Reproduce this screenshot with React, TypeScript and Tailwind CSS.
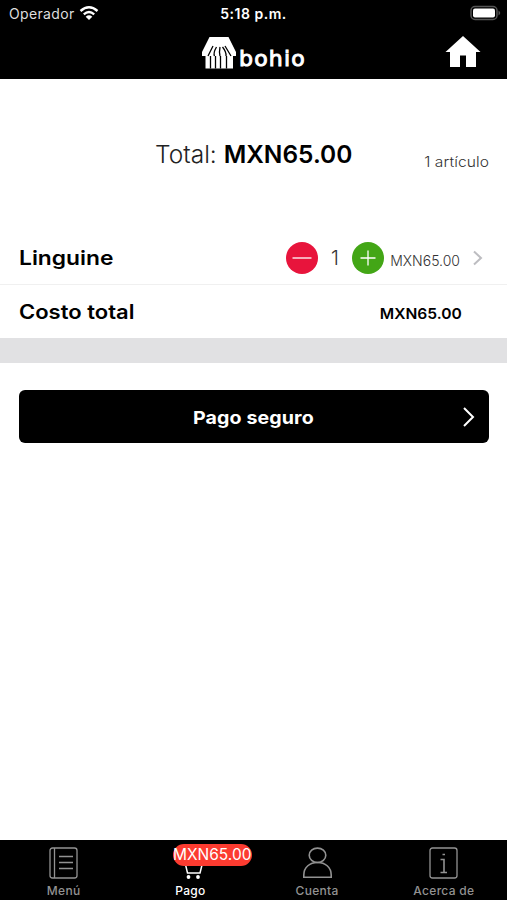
import type { ReactNode } from "react";

const PRICE = "MXN65.00";

export default function App() {
  return (
    <div className="flex h-[900px] w-[507px] flex-col overflow-hidden bg-white font-['Inter','Liberation_Sans',sans-serif] text-black">
      <header className="h-[79px] shrink-0 bg-black text-white">
        <StatusBar />
        <div className="grid h-[50px] grid-cols-3 items-center">
          <div />
          <Logo />
          <HomeIcon />
        </div>
      </header>

      <main className="flex-1">
        {/* Resumen */}
        <div className="grid h-[152px] grid-cols-[1fr_auto_1fr] items-center">
          <div />
          <h1 className="scale-x-[1.02] text-[24px] leading-8 font-light whitespace-nowrap text-[#222]">
            Total: <span className="font-semibold text-black">{PRICE}</span>
          </h1>
          <div className="origin-right scale-x-[1.11] pt-[12px] pr-[16px] text-right text-[14px] font-light tracking-[0.1px] text-[#333]">
            1 artículo
          </div>
        </div>

        <div className="flex h-[54px] items-center border-b border-[#f0f0f0] pr-[24px] pl-[19px]">
          <div className="flex-1 pt-px text-[20px] font-semibold">
            <span className="inline-block origin-left scale-x-[1.14]">Linguine</span>
          </div>
          <RoundButton color="bg-[#e8143c]">
            <path d="M6.5 16h19" />
          </RoundButton>
          <div className="w-[34px] text-center text-[20px] font-light text-[#333]">1</div>
          <RoundButton color="bg-[#43a616]">
            <path d="M8.5 16h15M16 8.500v15" />
          </RoundButton>
          <div className="w-[76px] pt-[5px] text-right text-[14px] font-light text-[#333]">{PRICE}</div>
          <svg className="ml-[12px] h-4 w-[11px]" viewBox="0 0 11 16" fill="none" stroke="#bdbdc1" strokeWidth="2">
            <path d="M2 1.500L9 8l-7 6.500" />
          </svg>
        </div>

        <div className="flex h-[53px] items-center justify-between pr-[45px] pl-[19px]">
          <div className="origin-left scale-x-[1.1] text-[20px] font-semibold">Costo total</div>
          <div className="origin-right scale-x-[1.04] pt-[5px] text-[15px] font-semibold">{PRICE}</div>
        </div>

        <div className="h-[25px] bg-[#e1e1e3]" />

        <button className="mx-[19px] mt-[27px] grid h-[53px] w-[470px] grid-cols-[1fr_auto_1fr] items-center rounded-[6px] bg-black text-white">
          <span />
          <span className="scale-x-[1.09] pt-px pr-[2px] text-[18px] font-bold tracking-[0.1px]">Pago seguro</span>
          <svg className="mr-[14px] h-5 w-3 justify-self-end" viewBox="0 0 12 20" fill="none" stroke="currentColor" strokeWidth="2">
            <path d="M1 1l9 9-9 9" />
          </svg>
        </button>
      </main>

      <nav className="grid h-[60px] shrink-0 grid-cols-4 bg-black text-[#929292]">
        <Tab label="Menú">
          <rect x="3" y="2" width="27" height="30" rx="2.500" />
          <path d="M7.500 2v30M12 10.500h14M12 16.500h14M12 22.500h14" />
        </Tab>
        <Tab label="Pago" active badge={PRICE}>
          <path d="M5 8h4l4.500 19h12.500l3-12H11" strokeWidth="1.500" />
          <g fill="currentColor" stroke="none">
            <circle cx="14.500" cy="31" r="1.900" />
            <circle cx="24" cy="31" r="1.900" />
          </g>
        </Tab>
        <Tab label="Cuenta">
          <ellipse cx="16.500" cy="9.300" rx="8.300" ry="7.200" strokeWidth="1.600" />
          <path d="M2.800 31.300V29C2.800 21 9 16.500 16.500 16.500S30.200 21 30.200 29v2.300z" strokeWidth="1.600" />
        </Tab>
        <Tab label="Acerca de">
          <rect x="3" y="2" width="27" height="30" rx="2.500" />
          <path d="M13.500 13.500h3.500v13M13.500 26.500h6.500M15.500 8.500h2.500" strokeWidth="1.600" />
        </Tab>
      </nav>
    </div>
  );
}

function StatusBar() {
  return (
    <div className="grid h-[27px] grid-cols-3 items-center text-[14px]">
      <div className="flex items-center pl-[9px]">
        <span className="tracking-[0.35px] text-[#dedede]">Operador</span>
        <svg className="mb-[2px] ml-[4px] h-[14px] w-5" viewBox="0 0 20 14" fill="none" stroke="white" strokeWidth="2.400">
          <path d="M1.500 5Q10-2.400 18.500 5M4.800 8.300Q10 3.800 15.200 8.300" />
          <path d="M10 14L6.700 10.700Q10 8 13.300 10.700z" fill="white" stroke="none" />
        </svg>
      </div>
      <div className="text-center font-semibold tracking-[0.5px] whitespace-nowrap">5:18 p.m.</div>
      <svg className="mr-[6px] mb-px h-4 w-[31px] justify-self-end" viewBox="0 0 31 16">
        <rect x="1" y="1.500" width="26" height="13" rx="4" fill="none" stroke="#555" strokeWidth="1.500" />
        <rect x="3" y="3.500" width="22" height="9" rx="2" fill="white" />
        <path d="M28.500 5.500q3.500 2.500 0 5z" fill="#555" />
      </svg>
    </div>
  );
}

function Logo() {
  return (
    <div className="flex h-[34px] items-center justify-center pt-px">
      <svg className="h-[32px] w-[36px] shrink-0" viewBox="0 0 36 32">
        <path d="M8.500 0h19L35 15v4h-3v12.500H4.500V19H1v-4z" fill="white" />
        <path
          d="M12 9L7 19M15.500 10Q12 16 13.500 19M19 10q-1 5 0 9M21.500 10q4 5 3.500 9M24 9l6 10"
          fill="none"
          stroke="black"
          strokeWidth="1.300"
        />
        <path d="M9.500 19v12.500M14.500 19v12.500M19.500 19v12.500M25.500 19v12.500" stroke="black" strokeWidth="1.300" />
      </svg>
      <span className="pt-[12px] pl-[2px] font-['DejaVu_Sans'] text-[22px] leading-6 tracking-[1.200px] [-webkit-text-stroke:1px_white]">
        bohio
      </span>
    </div>
  );
}

function HomeIcon() {
  return (
    <svg className="mr-[26px] mb-px h-[31px] w-[36px] justify-self-end" viewBox="0 0 36 31" fill="white">
      <path d="M18 0l17.500 16H31v15H21V19.500h-6V31H5V16H.500z" />
    </svg>
  );
}

function RoundButton({ color, children }: { color: string; children: ReactNode }) {
  return (
    <button className={`h-8 w-8 shrink-0 rounded-full ${color}`}>
      <svg className="h-8 w-8" viewBox="0 0 32 32" fill="none" stroke="white" strokeWidth="1.300">
        {children}
      </svg>
    </button>
  );
}

function Tab({ label, active, badge, children }: { label: string; active?: boolean; badge?: string; children: ReactNode }) {
  return (
    <div className={`relative flex flex-col items-center pt-[6px] pl-[0.500px] ${active ? "text-white" : ""}`}>
      <svg className="h-[34px] w-[33px]" viewBox="0 0 33 34" fill="none" stroke="currentColor" strokeWidth="1.300">
        {children}
      </svg>
      <span className="mt-[3px] text-[12px] leading-4 font-medium tracking-[0.3px]">{label}</span>
      {badge && (
        <span className="absolute top-[4px] left-[46px] flex h-[22px] w-[79px] items-center justify-center rounded-full bg-[#fc3b30] text-[15.500px] text-white">
          {badge}
        </span>
      )}
    </div>
  );
}
